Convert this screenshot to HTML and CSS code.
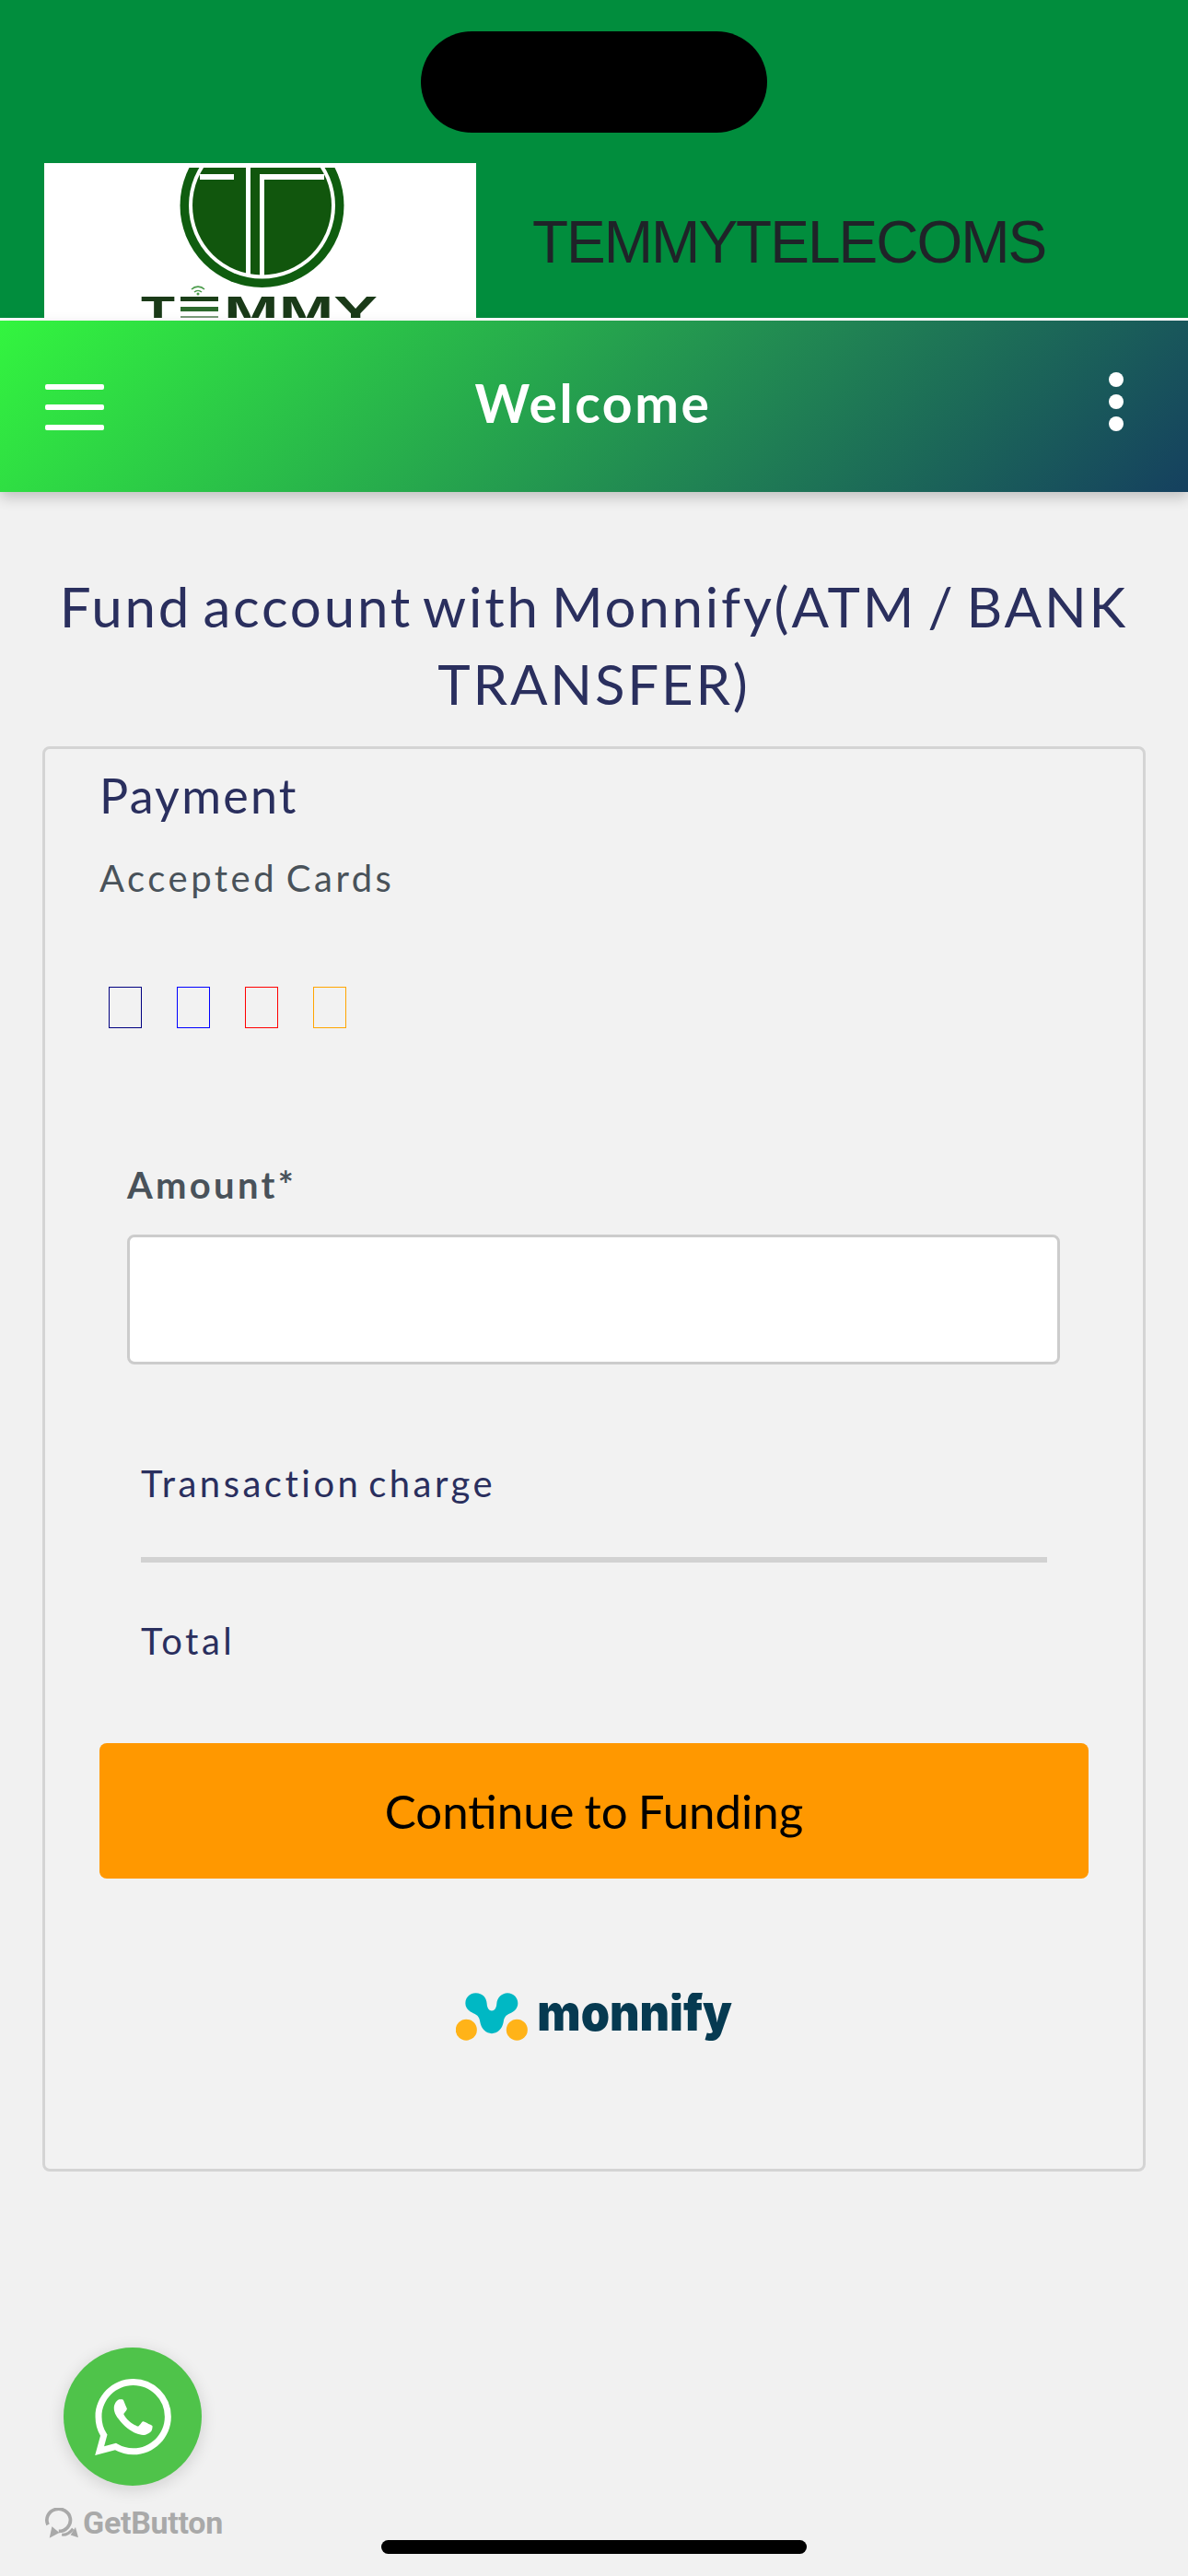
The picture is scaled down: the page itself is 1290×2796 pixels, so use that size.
FILE: index.html
```html
<!DOCTYPE html>
<html>
  <head>
    <meta charset="utf-8" />
    <title>Fund account</title>

    <link rel="stylesheet" href="styles.css">
  </head>

  <body>
    <div class="notch"></div>

    <div class="brand-bar">
      <div class="brand-logo">
        <svg viewBox="48 177 469 168" width="469" height="168">
          <rect x="48" y="177" width="469" height="168" fill="#fff" />
          <circle cx="284.5" cy="223" r="89" fill="#0f5d0f" />
          <circle cx="284.5" cy="223" r="79.5" fill="#fff" />
          <circle cx="284.5" cy="223" r="75.5" fill="#11560d" />
          <rect x="200" y="170" width="170" height="12" fill="#fff" />
          <rect x="217" y="189" width="37" height="6" fill="#fff" />
          <rect x="267" y="177" width="5" height="123" fill="#fff" />
          <rect x="282" y="189" width="5" height="111" fill="#fff" />
          <rect x="282" y="189" width="70" height="6" fill="#fff" />
          <text class="logo-word" x="153" y="353" textLength="37" lengthAdjust="spacingAndGlyphs">T</text>
          <text class="logo-word" x="243" y="353" textLength="167" lengthAdjust="spacingAndGlyphs">MMY</text>
          <rect x="196" y="322" width="41" height="5" fill="#1a3f18" />
          <rect x="196" y="333" width="41" height="5" fill="#2d6a2d" />
          <rect x="196" y="343" width="41" height="2" fill="#7a9c7a" />
          <path d="M208 314a10 10 0 0 1 14 0M211 317a6 6 0 0 1 8 0" fill="none" stroke="#4b9b4b" stroke-width="1.6" />
          <circle cx="215" cy="319" r="1.5" fill="#4b9b4b" />
        </svg>
      </div>
      <div class="brand-name">TEMMYTELECOMS</div>
    </div>

    <div class="app-bar">
      <svg class="menu-icon" viewBox="0 0 64 50" width="64" height="50">
        <rect x="0" y="0" width="64" height="6" rx="2" />
        <rect x="0" y="22" width="64" height="6" rx="2" />
        <rect x="0" y="44" width="64" height="6" rx="2" />
      </svg>
      <div class="app-title">Welcome</div>
      <div class="more-icon"><span></span><span></span><span></span></div>
    </div>

    <h2 class="page-title">Fund account with Monnify(ATM / BANK TRANSFER)</h2>

    <div class="pay-card">
      <h3 class="pay-head">Payment</h3>
      <div class="pay-sub">Accepted Cards</div>
      <div class="card-icons">
        <span class="navy"></span>
        <span class="blue"></span>
        <span class="red"></span>
        <span class="orange"></span>
      </div>

      <div class="amount-field">
        <label for="amount">Amount*</label>
        <input type="text" id="amount" />
      </div>

      <div class="charges">
        <p>Transaction charge</p>
        <hr />
        <p>Total</p>
      </div>

      <button class="fund-btn" type="button">Continue to Funding</button>

      <div class="monnify-logo">
        <svg viewBox="135 100 900 155" width="300" height="52">
          <circle cx="169" cy="220" r="34.5" fill="#ffb318" />
          <circle cx="334" cy="220" r="34.5" fill="#ffb318" />
          <path fill="#00b8c4" d="M200 100C222 100 235 115 236 135C237 150 243 158 252 158C261 158 267 150 268 135C269 115 285 100 303 100C323 100 337 115 337 133C337 150 325 160 312 166C297 172 292 180 290 195C286 218 270 232 252 232C234 232 218 218 214 195C212 180 207 172 192 166C179 160 166 150 166 133C166 115 180 100 200 100Z" />
          <text class="monnify-word" x="400" y="222" textLength="635" lengthAdjust="spacingAndGlyphs">monnify</text>
        </svg>
      </div>
    </div>

    <div class="chat-widget">
      <div class="chat-btn">
        <svg viewBox="0 0 24 24" width="83" height="83">
          <path fill="#fff" d="M17.472 14.382c-.297-.149-1.758-.867-2.03-.967-.273-.099-.471-.148-.67.15-.197.297-.767.966-.94 1.164-.173.199-.347.223-.644.075-.297-.15-1.255-.463-2.39-1.475-.883-.788-1.48-1.761-1.653-2.059-.173-.297-.018-.458.13-.606.134-.133.298-.347.446-.52.149-.174.198-.298.298-.497.099-.198.05-.371-.025-.52-.075-.149-.669-1.612-.916-2.207-.242-.579-.487-.5-.669-.51-.173-.008-.371-.01-.57-.01-.198 0-.52.074-.792.372-.272.297-1.04 1.016-1.04 2.479 0 1.462 1.065 2.875 1.213 3.074.149.198 2.096 3.2 5.077 4.487.709.306 1.262.489 1.694.625.712.227 1.36.195 1.871.118.571-.085 1.758-.719 2.006-1.413.248-.694.248-1.289.173-1.413-.074-.124-.272-.198-.57-.347m-5.421 7.403h-.004a9.87 9.87 0 01-5.031-1.378l-.361-.214-3.741.982.998-3.648-.235-.374a9.86 9.86 0 01-1.51-5.26c.001-5.45 4.436-9.884 9.888-9.884 2.64 0 5.122 1.03 6.988 2.898a9.825 9.825 0 012.893 6.994c-.003 5.45-4.437 9.884-9.885 9.884m8.413-18.297A11.815 11.815 0 0012.05 0C5.495 0 .16 5.335.157 11.892c0 2.096.547 4.142 1.588 5.945L.057 24l6.305-1.654a11.882 11.882 0 005.683 1.448h.005c6.554 0 11.89-5.335 11.893-11.893a11.821 11.821 0 00-3.48-8.413z" />
        </svg>
      </div>
      <div class="get-button">
        <svg viewBox="25 38 110 97" width="37" height="33">
          <path d="M37 92A38 36 0 1 1 72 113" fill="none" stroke="#a9a9a9" stroke-width="11" />
          <path d="M42 135L50 98L74 118Z" fill="#a9a9a9" />
          <path d="M82 124C95 126 108 118 118 105" fill="none" stroke="#a9a9a9" stroke-width="9" />
          <path d="M110 125L135 133L126 100Z" fill="#a9a9a9" />
        </svg>
        <span>GetButton</span>
      </div>
    </div>

    <div class="home-bar"></div>
  </body>
</html>
```

FILE: styles.css
```css
* {
  margin: 0;
  padding: 0;
  box-sizing: border-box;
}
html,
body {
  width: 1290px;
  height: 2796px;
  overflow: hidden;
}
body {
  position: relative;
  background: #f1f1f1;
  font-family: "Lato", "Liberation Sans", sans-serif;
}
.notch {
  position: absolute;
  left: 457px;
  top: 34px;
  width: 376px;
  height: 110px;
  border-radius: 55px;
  background: #000;
}
.brand-bar {
  display: flex;
  align-items: center;
  height: 348px;
  padding: 177px 0 0 48px;
  background: #018d3d;
  border-bottom: 3px solid #fff;
}
.brand-logo {
  width: 469px;
  height: 168px;
  flex-shrink: 0;
  overflow: hidden;
}
.brand-logo svg {
  display: block;
}
.logo-word {
  font-family: "Liberation Sans", sans-serif;
  font-weight: 700;
  font-size: 44px;
  fill: #1a3a18;
}
.brand-name {
  margin-left: 61px;
  margin-top: 3px;
  font-family: "Liberation Sans", sans-serif;
  font-size: 64px;
  letter-spacing: -2px;
  color: #1f2328;
}
.app-bar {
  position: relative;
  display: flex;
  align-items: center;
  justify-content: space-between;
  height: 186px;
  padding: 0 70px 0 49px;
  background: linear-gradient(135deg, #33f53f, #15405f);
  box-shadow: 0 6px 14px rgba(0, 0, 0, 0.2);
}
.menu-icon {
  fill: #fff;
  margin-top: 2px;
}
.app-title {
  margin-bottom: 8px;
  font-size: 57px;
  font-weight: 700;
  letter-spacing: 2.6px;
  color: #fff;
}
.more-icon {
  display: flex;
  flex-direction: column;
  align-items: flex-end;
  gap: 8px;
  width: 45px;
  margin-bottom: 10px;
}
.more-icon span {
  display: block;
  width: 16px;
  height: 16px;
  border-radius: 50%;
  background: #fff;
}
.page-title {
  margin: 82px 0 26px;
  padding: 0 46px;
  font-size: 60px;
  font-weight: 400;
  line-height: 84px;
  letter-spacing: 2.8px;
  word-spacing: -6px;
  text-align: center;
  color: #2a2f5e;
}
.pay-card {
  height: 1547px;
  margin: 0 46px;
  padding: 20px 59px 0;
  border: 3px solid #d4d4d4;
  border-radius: 8px;
  background: #f2f2f2;
}
.pay-head {
  font-size: 52px;
  font-weight: 400;
  line-height: 60px;
  letter-spacing: 2.25px;
  color: #2a2f5e;
}
.pay-sub {
  margin-top: 36px;
  font-size: 40px;
  line-height: 48px;
  letter-spacing: 3.5px;
  word-spacing: -4px;
  color: #49525a;
}
.card-icons {
  display: flex;
  gap: 38px;
  margin: 94px 0 0 10px;
}
.card-icons span {
  display: block;
  width: 36px;
  height: 45px;
  border: 1px solid;
}
.navy {
  border-color: #000080 !important;
}
.blue {
  border-color: #0000ff !important;
}
.red {
  border-color: #ff0000 !important;
}
.orange {
  border-color: #ffa500 !important;
}
.amount-field {
  margin: 146px 30px 0;
}
.amount-field label {
  display: block;
  font-size: 40px;
  font-weight: 700;
  line-height: 48px;
  letter-spacing: 3.3px;
  color: #49525a;
}
.amount-field input {
  display: block;
  width: 1013px;
  height: 141px;
  margin-top: 30px;
  border: 3px solid #cccccc;
  border-radius: 8px;
  background: #fff;
}
.charges {
  margin: 105px 45px 0;
}
.charges p {
  font-size: 40px;
  line-height: 48px;
  letter-spacing: 3.5px;
  word-spacing: -6px;
  color: #2a2f5e;
}
.charges hr {
  height: 6px;
  margin: 56px 0 61px;
  border: 0;
  background: #d2d2d2;
}
.fund-btn {
  display: block;
  width: 100%;
  height: 147px;
  margin-top: 87px;
  border: 0;
  border-radius: 8px;
  background: #ff9800;
  font-family: "Lato", "Liberation Sans", sans-serif;
  font-size: 51px;
  word-spacing: -2px;
  color: #000;
}
.monnify-logo {
  display: flex;
  justify-content: center;
  margin-top: 124px;
}
.monnify-word {
  font-family: "Inter", sans-serif;
  font-weight: 900;
  font-size: 163px;
  fill: #063a51;
}
.chat-widget {
  position: absolute;
  left: 48px;
  top: 2548px;
}
.chat-btn {
  display: flex;
  align-items: center;
  justify-content: center;
  width: 150px;
  height: 150px;
  margin-left: 21px;
  border-radius: 50%;
  background: #4fc34a;
  box-shadow: 0 4px 18px rgba(0, 0, 0, 0.14);
}
.get-button {
  display: flex;
  align-items: center;
  gap: 5px;
  margin-top: 20px;
  font-family: "Roboto", sans-serif;
  font-size: 34px;
  font-weight: 700;
  line-height: 40px;
  letter-spacing: -0.3px;
  color: #a9a9a9;
}
.home-bar {
  position: absolute;
  left: 414px;
  top: 2757px;
  width: 462px;
  height: 15px;
  border-radius: 8px;
  background: #000;
}
```
